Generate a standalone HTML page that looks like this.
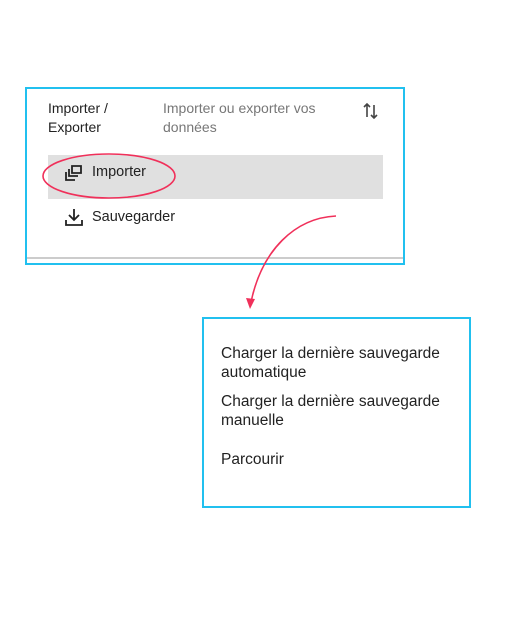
<!DOCTYPE html>
<html><head><style>
body{margin:0;width:521px;height:636px;background:#fff;font-family:"Liberation Sans",sans-serif;position:relative;overflow:hidden}
.a{position:absolute}
.t{font-size:14px;color:#222;line-height:19px}
.g{color:#777}
.b2 .t{font-size:15.5px;line-height:19px}
</style></head><body>
<div class="a" style="left:25px;top:87px;width:376px;height:174px;border:2px solid #21c0ef"></div>
<div class="a" style="left:27px;top:257px;width:376px;height:2px;background:#ccc"></div>
<div class="a t" style="left:48px;top:99px">Importer /<br>Exporter</div>
<div class="a t g" style="left:163px;top:99px">Importer ou exporter vos<br>données</div>
<svg class="a" style="left:362px;top:101px" width="18" height="20" viewBox="0 0 18 20"><path d="M5 16V3M2 6l3-3 3 3M12 4v13M9 14l3 3 3-3" stroke="#444" stroke-width="1.6" fill="none"/></svg>
<div class="a" style="left:48px;top:155px;width:335px;height:44px;background:#e0e0e0"></div>
<svg class="a" style="left:63px;top:163px" width="20" height="20" viewBox="0 0 20 20"><path d="M9 3h9v7H9z M6 6v7h9 M3 9v8h9" stroke="#222" stroke-width="1.8" fill="none"/></svg>
<div class="a t" style="left:92px;top:163px;font-size:14.5px">Importer</div>
<svg class="a" style="left:64px;top:207px" width="20" height="20" viewBox="0 0 20 20"><path d="M10 2v11M5 8l5 5 5-5M2 13v5h16v-5" stroke="#222" stroke-width="1.8" fill="none"/></svg>
<div class="a t" style="left:92px;top:208px;font-size:14.5px">Sauvegarder</div>
<svg class="a" style="left:0;top:0" width="521" height="636"><ellipse cx="109" cy="176" rx="66" ry="22" fill="none" stroke="#f0305a" stroke-width="1.6"/><path d="M336 216C295 218 262 250 251 302" stroke="#f0305a" stroke-width="1.6" fill="none"/><path d="M246 298l4 11 5-10z" fill="#f0305a"/></svg>
<div class="a b2" style="left:202px;top:317px;width:265px;height:187px;border:2px solid #21c0ef">
<div class="a t" style="left:17px;top:25px">Charger la dernière sauvegarde<br>automatique</div>
<div class="a t" style="left:17px;top:73px">Charger la dernière sauvegarde<br>manuelle</div>
<div class="a t" style="left:17px;top:131px">Parcourir</div>
</div>
</body></html>
